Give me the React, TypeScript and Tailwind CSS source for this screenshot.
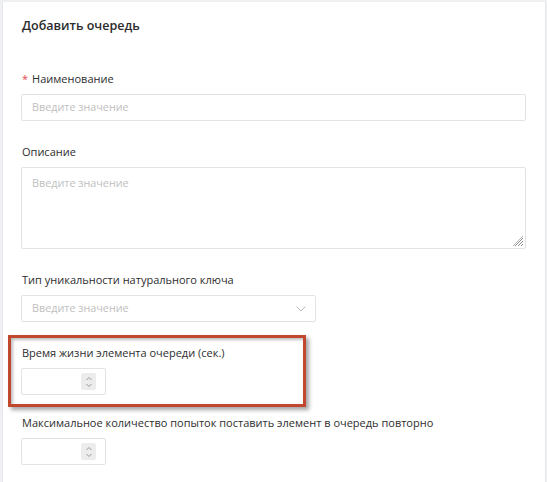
import React from "react";

const font = { fontFamily: '"Open Sans", "Noto Sans", sans-serif' };

function Spinner() {
  return (
    <div className="absolute right-[9px] top-[4px] w-[15px] h-[17px] bg-[#ececec] rounded-[2px] flex flex-col items-center justify-center">
      <svg width="8" height="14" viewBox="0 0 8 14" fill="none" stroke="#9a9a9a" strokeWidth="1">
        <path d="M1.5 5 L4 2.5 L6.5 5" />
        <path d="M1.5 9 L4 11.5 L6.5 9" />
      </svg>
    </div>
  );
}

function NumberInput() {
  return (
    <div className="relative w-[85px] h-[27px] border border-[#e3e3e3] rounded-[2px] bg-white">
      <Spinner />
    </div>
  );
}

function Label({ children, required }: { children: React.ReactNode; required?: boolean }) {
  return (
    <div className="h-[16px] leading-[16px] text-[11px] text-[#2e2e2e] mb-[7px] whitespace-nowrap">
      {required && <span className="text-[#e5484d] mr-[4px]">*</span>}
      {children}
    </div>
  );
}

export default function App() {
  return (
    <div className="w-[547px] h-[482px] bg-[#eef0f2] pt-[2px] pl-[2px] pr-[1px] overflow-hidden" style={font}>
      <div className="h-[480px] bg-white border-l border-r border-[#e6e8eb] pl-[18px] pr-[18px] pt-[14px]">
        <div className="h-[20px] leading-[20px] pl-[1px] text-[12.5px] font-semibold text-[#2b2b2b]">Добавить очередь</div>

        <div className="mt-[35px] pl-[1px]">
          <Label required>Наименование</Label>
        </div>
        <div className="w-[505px] h-[27px] border border-[#e3e3e3] rounded-[2px] px-[10px] flex items-center text-[10.8px] text-[#c0c0c0]">
          Введите значение
        </div>

        <div className="mt-[23px] pl-[1px]">
          <Label>Описание</Label>
        </div>
        <div className="relative w-[505px] h-[82px] border border-[#e3e3e3] rounded-[2px] px-[10px] pt-[7px] text-[10.8px] leading-[16px] text-[#c0c0c0]">
          Введите значение
          <svg className="absolute right-[1px] bottom-[1px]" width="12" height="12" viewBox="0 0 12 12" stroke="#8a8a8a" strokeWidth="1">
            <path d="M11 3 L3 11" />
            <path d="M11 6 L6 11" />
            <path d="M11 9 L9 11" />
            <path d="M11 1 L1 11" stroke="#b5b5b5" />
          </svg>
        </div>

        <div className="mt-[23px] pl-[1px]">
          <Label>Тип уникальности натурального ключа</Label>
        </div>
        <div className="w-[295px] h-[27px] border border-[#e3e3e3] rounded-[2px] pl-[10px] pr-[8px] flex items-center justify-between text-[10.8px] text-[#c0c0c0]">
          <span>Введите значение</span>
          <svg width="12" height="8" viewBox="0 0 12 8" fill="none" stroke="#b8b8b8" strokeWidth="1">
            <path d="M1.5 1.5 L6 6 L10.5 1.5" />
          </svg>
        </div>

        <div className="relative mt-[23px]">
          <div className="pl-[1px]">
            <Label>Время жизни элемента очереди (сек.)</Label>
          </div>
          <NumberInput />
          <div className="absolute left-[-13px] top-[-10px] w-[298px] h-[72px] border-[3px] border-[#c2472f] shadow-[3px_3px_4px_rgba(0,0,0,0.35),inset_2px_2px_3px_rgba(0,0,0,0.25)] pointer-events-none" />
        </div>

        <div className="mt-[20px] pl-[1px]">
          <Label>Максимальное количество попыток поставить элемент в очередь повторно</Label>
        </div>
        <NumberInput />
      </div>
    </div>
  );
}
